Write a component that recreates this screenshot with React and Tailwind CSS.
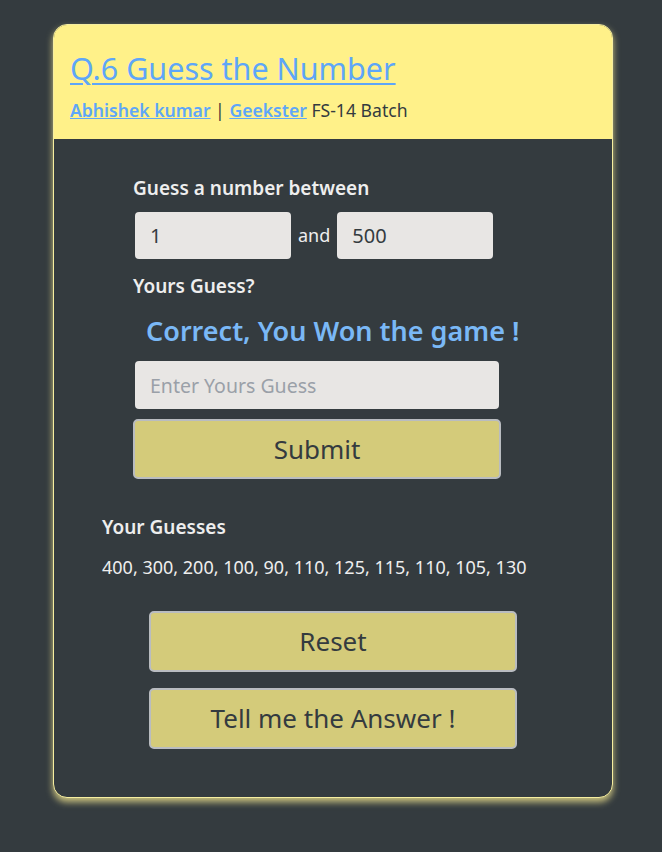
import React from 'react';

const guesses = [400, 300, 200, 100, 90, 110, 125, 115, 110, 105, 130];

export default function App() {
  return (
    <div className="min-h-[852px] w-full bg-[#343b3f] pt-6 pb-12 font-['Noto_Sans',sans-serif]">
      <div className="ml-[53px] w-[560px] rounded-[14px] border border-[#f6eea0] bg-[#343b3f] shadow-[0_4px_7px_rgba(255,241,150,0.75)] overflow-hidden">
        {/* header */}
        <div className="bg-[#fff189] px-4 pt-[23px] pb-[17px]">
          <h1 className="text-[30.5px] leading-[40px] text-[#5ea6f8] underline decoration-2 underline-offset-[3px]">
            Q.6 Guess the Number
          </h1>
          <p className="mt-[10px] text-[17.6px] leading-[24px] text-[#343b3f]">
            <a className="font-semibold text-[#5ea6f8] underline">Abhishek kumar</a>
            {' | '}
            <a className="font-semibold text-[#5ea6f8] underline">Geekster</a> FS-14 Batch
          </p>
        </div>

        {/* form */}
        <div className="pt-[36px] pl-[79px]">
          <div className="text-[19px] font-semibold text-[#eeeeee] leading-[26px]">Guess a number between</div>
          <div className="mt-[11px] flex items-center pl-[2px]">
            <input
              readOnly
              value="1"
              className="h-[47px] w-[156px] rounded-[4px] bg-[#e8e6e4] px-[15px] text-[20px] text-[#343b3f] outline-none"
            />
            <span className="mx-[7px] text-[18px] text-[#eeeeee]">and</span>
            <input
              readOnly
              value="500"
              className="h-[47px] w-[156px] rounded-[4px] bg-[#e8e6e4] px-[15px] text-[20px] text-[#343b3f] outline-none"
            />
          </div>
          <div className="mt-[14px] text-[19px] font-semibold text-[#eeeeee] leading-[26px]">Yours Guess?</div>
          <div className="mt-[14px] pl-[13px] text-[27px] font-semibold leading-[36px] text-[#7ab8f6]">
            Correct, You Won the game !
          </div>
          <div className="mt-[12px] pl-[2px]">
            <input
              readOnly
              placeholder="Enter Yours Guess"
              className="h-[48px] w-[364px] rounded-[4px] bg-[#e8e6e4] px-[15px] text-[19.5px] text-[#343b3f] placeholder:text-[#9aa0a8] outline-none"
            />
          </div>
          <button className="mt-[10px] h-[60px] w-[368px] rounded-[5px] border-2 border-[#b9bcc0] bg-[#d4cb7a] text-[26px] text-[#343b3f]">
            Submit
          </button>
        </div>

        {/* guesses */}
        <div className="mt-[36px] pl-[48px]">
          <div className="text-[19px] font-semibold leading-[24px] text-[#eeeeee]">Your Guesses</div>
          <div className="mt-[16px] text-[18px] leading-[24px] text-[#eeeeee]">{guesses.join(', ')}</div>
        </div>

        {/* actions */}
        <div className="mt-[32px] flex flex-col items-center gap-[16px] pb-[48px]">
          <button className="h-[61px] w-[368px] rounded-[5px] border-2 border-[#b9bcc0] bg-[#d4cb7a] text-[26px] text-[#343b3f]">
            Reset
          </button>
          <button className="h-[61px] w-[368px] rounded-[5px] border-2 border-[#b9bcc0] bg-[#d4cb7a] text-[26px] text-[#343b3f]">
            Tell me the Answer !
          </button>
        </div>
      </div>
    </div>
  );
}
